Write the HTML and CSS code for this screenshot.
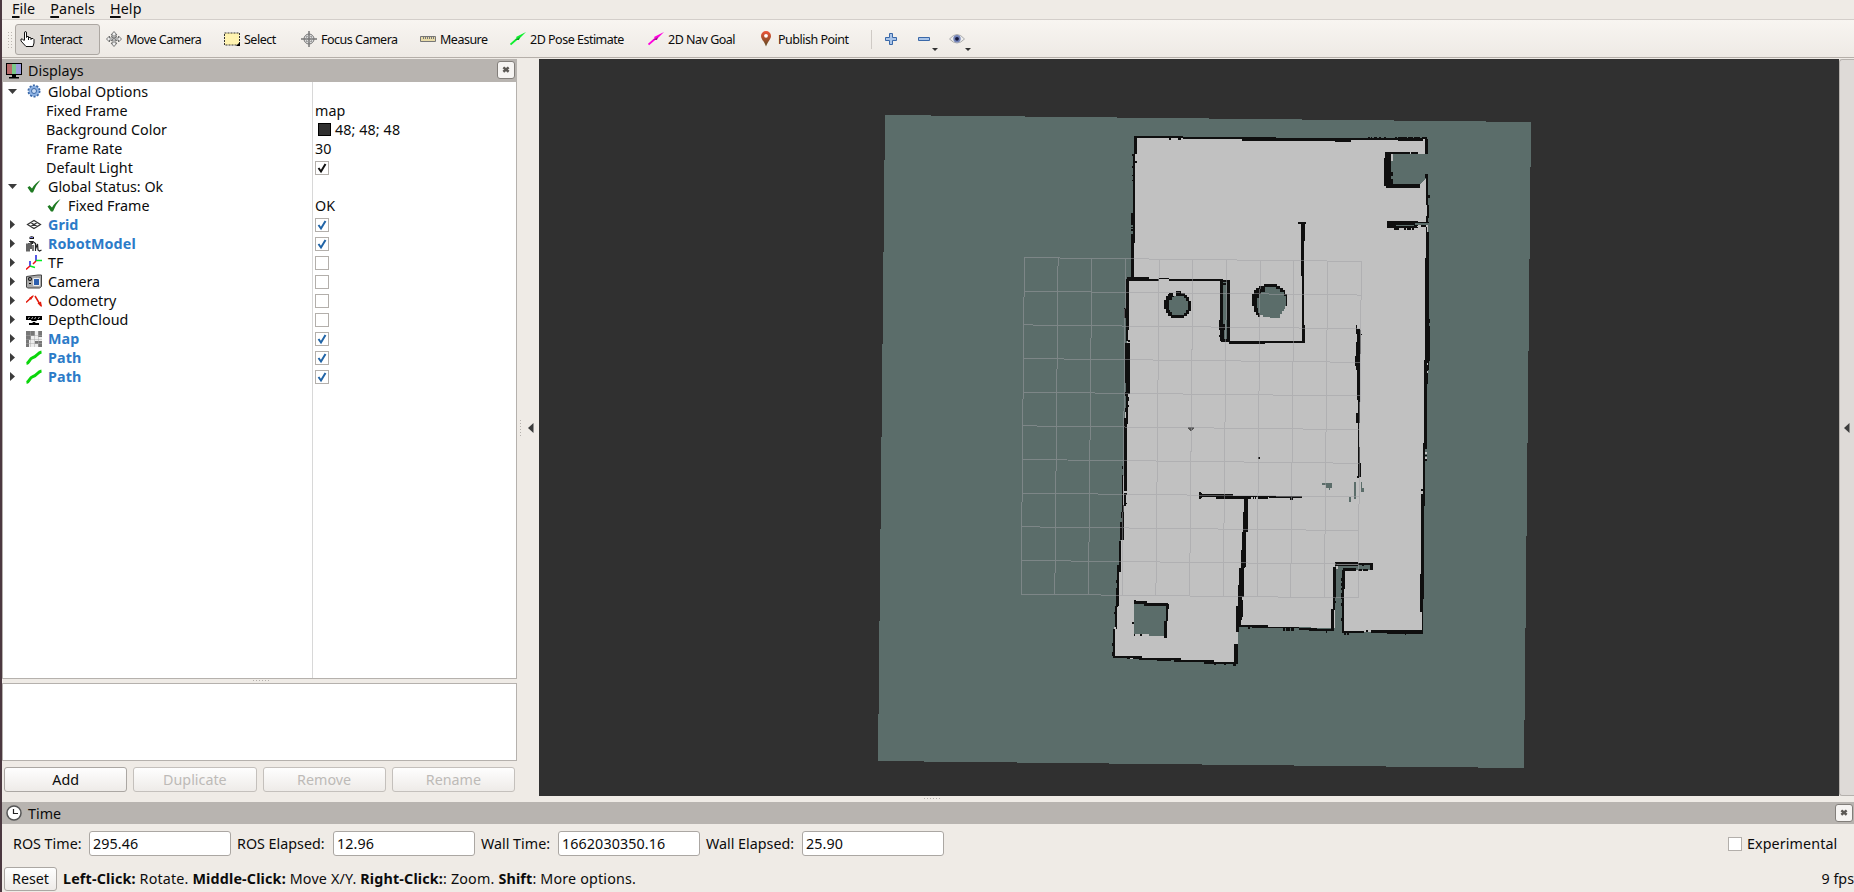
FILE: index.html
```html
<!DOCTYPE html>
<html lang="en">
<head>
<meta charset="utf-8">
<title>RViz</title>
<link rel="stylesheet" href="styles.css">
</head>
<body>
<svg class="defs" width="0" height="0">
  <defs>
    <linearGradient id="pin" x1="0" y1="0" x2="0" y2="1"><stop offset="0" stop-color="#f0543a"/><stop offset="1" stop-color="#5a4a20"/></linearGradient>
    <symbol id="close" viewBox="0 0 18 18"><path d="M6 6l6 5M12 6l-6 5" stroke="#5c5955" stroke-width="2.8"/></symbol>
    <symbol id="down" viewBox="0 0 9 9"><path d="M0 2h9L4.500 7z" fill="#3c3c3c"/></symbol>
    <symbol id="right" viewBox="0 0 9 9"><path d="M2 0v9l5-4.500z" fill="#3c3c3c"/></symbol>
    <symbol id="tick" viewBox="0 0 14 14"><path d="M.5 8l2-1.500 2.500 2.500Q8 3.500 13.500 .5 8.500 6 6 13H4Z" fill="#1e7a22"/></symbol>
    <symbol id="mark" viewBox="0 0 12 12"><path d="M2.500 6l2.500 3.500L9.500 2" fill="none" stroke="currentColor" stroke-width="2"/></symbol>
    <symbol id="path" viewBox="0 0 16 16"><path d="M.5 13.500C3.500 13 3 8.500 7 7.500S11.500 2.500 15.500 2" fill="none" stroke="#0bd50b" stroke-width="3"/></symbol>
  </defs>
</svg>
<div class="window">
  <nav class="menubar"><span><u>F</u>ile</span><span><u>P</u>anels</span><span><u>H</u>elp</span></nav>
  <div class="toolbar">
    <i class="grip"></i>
    <button class="tool active t1"><svg class="ic" viewBox="0 0 16 16"><path d="M4.500 9V2Q4.500.5 5.500.5T6.500 2v4.500L7 5.500h1.500l.5 1h1.500l.5 1h2l1 1V12l-1 3.500H6L1 10V8h1.500L4.500 10M8.500 6v3M11 7v2" fill="#fff" stroke="#111"/></svg><b>Interact</b></button>
    <button class="tool t2"><svg class="ic" viewBox="0 0 16 16"><path d="M8 .5L11 4H9v3h3.500V5L15.500 8 12.500 11V9H9v3h2L8 15.500 5 12h2V9H3.500v2L.5 8 3.500 5v2H7V4H5zM5 5l6 5M11 5l-6 5" fill="#eee" stroke="#666" stroke-width=".9"/></svg><b>Move Camera</b></button>
    <button class="tool t3"><svg class="ic" viewBox="0 0 16 16"><path d="M.5 2h15v12H.5z" fill="#fff3b0" stroke="#333" stroke-dasharray="2 1"/><path d="M16 11v4h-4z"/></svg><b>Select</b></button>
    <button class="tool t4"><svg class="ic" viewBox="0 0 16 16"><circle cx="8" cy="8" r="5" fill="#ddd" stroke="#777"/><path d="M8 0v16M0 8h16" fill="none" stroke="#777" stroke-width="1.500"/><path d="M5 5.500h6M5 10.500h6M5.500 5v6M10.500 5v6" stroke="#999" stroke-width=".8"/></svg><b>Focus Camera</b></button>
    <button class="tool t5"><svg class="ic" viewBox="0 0 16 16"><path d="M.5 5.500h15v5H.5z" fill="#e8dba8" stroke="#777"/><path d="M3.500 6v2M5.500 6v2M7.500 6v2M9.500 6v2M11.500 6v2M13.500 6v2" stroke="#777"/></svg><b>Measure</b></button>
    <button class="tool t6"><svg class="ic" viewBox="0 0 16 16"><path d="M.5 13.500L8 7" stroke="#0df02d" stroke-width="1.800"/><path d="M16 1L6 6l2 3z" fill="#0df02d"/><path d="M5 9l4 0 1-3z" fill="#129a24"/></svg><b>2D Pose Estimate</b></button>
    <button class="tool t7"><svg class="ic" viewBox="0 0 16 16"><path d="M.5 13.500L8 7" stroke="#f0d" stroke-width="1.800"/><path d="M16 1L6 6l2 3z" fill="#f0d"/><path d="M5 9l4 0 1-3z" fill="#9a1a8a"/></svg><b>2D Nav Goal</b></button>
    <button class="tool t8"><svg class="ic" viewBox="0 0 16 16"><path d="M8 0a5 5 0 0 1 5 5C13 8 9.500 11 8 15.500 6.500 11 3 8 3 5a5 5 0 0 1 5-5z" fill="url(#pin)"/><circle cx="8" cy="4.800" r="1.900" fill="#fff"/></svg><b>Publish Point</b></button>
    <i class="sep"></i>
    <span class="mini"><svg class="ic" viewBox="0 0 16 16"><path d="M6.500 2.500h3v4h4v3h-4v4h-3v-4h-4v-3h4z" fill="#a9c4e8" stroke="#3a68a8"/></svg></span>
    <span class="mini drop"><svg class="ic" viewBox="0 0 16 16"><path d="M2.500 6.500h11v3h-11z" fill="#a9c4e8" stroke="#3a68a8"/></svg></span>
    <span class="mini drop"><svg class="ic" viewBox="0 0 16 16"><path d="M.5 8Q8-1 15.500 8 8 16 .5 8z" fill="#eee" stroke="#aaa"/><circle cx="8" cy="7.800" r="3.700" fill="#7484b8"/><circle cx="8" cy="7.800" r="1.900" fill="#15183c"/></svg></span>
  </div>
  <div class="main">
    <section class="dock">
      <header class="title"><svg class="ic" viewBox="0 0 16 16"><path d="M0 0h16v12H0z"/><path d="M1 1h5v10H1z" fill="#b96a6a"/><path d="M6 1h4v10H6z" fill="#7cc98a"/><path d="M10 1h5v10h-5z" fill="#9c9cdc"/><path d="M6 12h4v2h3v1.500H3V14h3z"/></svg><span>Displays</span><svg class="close"><use href="#close"/></svg></header>
      <div class="tree">
        <div class="row"><svg class="ar"><use href="#down"/></svg><svg class="ic" viewBox="0 0 16 16"><circle cx="8" cy="7" r="5.500" fill="#8db2e3" stroke="#3a68a8" stroke-width="2" stroke-dasharray="2 1.450"/><circle cx="8" cy="7" r="4.700" fill="#8db2e3"/><circle cx="8" cy="7" r="2.500" fill="#c8daf2" stroke="#3a68a8"/></svg><span class="name">Global Options</span></div>
        <div class="row leaf"><span class="name">Fixed Frame</span><span class="val">map</span></div>
        <div class="row leaf"><span class="name">Background Color</span><span class="val"><i class="swatch"></i>48; 48; 48</span></div>
        <div class="row leaf"><span class="name">Frame Rate</span><span class="val">30</span></div>
        <div class="row leaf"><span class="name">Default Light</span><span class="val"><i class="box black"><svg><use href="#mark"/></svg></i></span></div>
        <div class="row"><svg class="ar"><use href="#down"/></svg><svg class="ic tk"><use href="#tick"/></svg><span class="name">Global Status: Ok</span></div>
        <div class="row sub"><svg class="ic tk"><use href="#tick"/></svg><span class="name">Fixed Frame</span><span class="val">OK</span></div>
        <div class="row on"><svg class="ar"><use href="#right"/></svg><svg class="ic" viewBox="0 0 16 16"><path d="M1.500 7.500L8 3.500l6.500 4-6.500 4zM4.700 5.500l6.600 4M11.300 5.500l-6.600 4" fill="none" stroke="#333" stroke-width="1.200"/></svg><span class="name">Grid</span><span class="val"><i class="box"><svg><use href="#mark"/></svg></i></span></div>
        <div class="row on"><svg class="ar"><use href="#right"/></svg><svg class="ic" viewBox="0 0 16 16"><path d="M3.500 1q2-1.500 4.500 0v2H3.500z" fill="#111"/><path d="M4 1.500h3" stroke="#77c" stroke-width="1"/><path d="M1 7.500v8M3 7v8.500M5 6v7M6.500 5v3" fill="none" stroke="#222" stroke-width="1.400"/><path d="M3 5.500h4l2.500 2V15M7 9v6M9.500 13l2-5 .5 6 1.500 1 2-1" fill="none" stroke="#222" stroke-width="1.200"/></svg><span class="name">RobotModel</span><span class="val"><i class="box"><svg><use href="#mark"/></svg></i></span></div>
        <div class="row"><svg class="ar"><use href="#right"/></svg><svg class="ic" viewBox="0 0 16 16"><g fill="none" stroke-width="1.500"><path d="M10 6V0M4 11V6" stroke="#22d"/><path d="M10 5.500h6M4 11l5 1.500" stroke="#0e2"/><path d="M10 6L7 9M4 11l-4 3.500" stroke="#e11"/></g></svg><span class="name">TF</span><span class="val"><i class="box"></i></span></div>
        <div class="row"><svg class="ar"><use href="#right"/></svg><svg class="ic" viewBox="0 0 16 16"><path d="M.5 2.500L12 1h3.500v11.500l-2 1.500H1.500L.5 13z" fill="#aaa" stroke="#444"/><circle cx="4" cy="5" r="2" fill="#111"/><circle cx="4" cy="5" r=".8" fill="#fff"/><path d="M7.500 4.500h6v7h-6z" fill="#2d5fae" stroke="#eee"/><path d="M3 9h2v1H3z"/></svg><span class="name">Camera</span><span class="val"><i class="box"></i></span></div>
        <div class="row"><svg class="ar"><use href="#right"/></svg><svg class="ic" viewBox="0 0 16 16"><path d="M0 9.500L7 3M9 3l6 10" stroke="#e21b0c" stroke-width="1.500"/><path d="M8 2L3 5l2 2zM16 14l-1-5.500-3.500 2z" fill="#e21b0c"/></svg><span class="name">Odometry</span><span class="val"><i class="box"></i></span></div>
        <div class="row"><svg class="ar"><use href="#right"/></svg><svg class="ic" viewBox="0 0 16 16"><path d="M0 4h16v4h-5l-2 3h4v2H3v-2h4L5 8H0z"/><path d="M2 6.500l1.500-1M5.500 6.500l1.500-1M8.500 6.500l1.500-1M12 6.500l1.500-1M5.500 9.500h5" stroke="#eee"/></svg><span class="name">DepthCloud</span><span class="val"><i class="box"></i></span></div>
        <div class="row on"><svg class="ar"><use href="#right"/></svg><svg class="ic" viewBox="0 0 16 16"><path d="M0 0h16v16H0z" fill="#eee"/><path d="M0 0h9v5H5v4H3v7H0zM12 0h4v6h-4zM9 10h7v6h-4v-3H9z" fill="#777"/><path d="M4.500 0v16M8.500 0v16M12.500 0v16M0 4.500h16M0 8.500h16M0 12.500h16" stroke="#aaa" stroke-width=".5"/></svg><span class="name">Map</span><span class="val"><i class="box"><svg><use href="#mark"/></svg></i></span></div>
        <div class="row on"><svg class="ar"><use href="#right"/></svg><svg class="ic"><use href="#path"/></svg><span class="name">Path</span><span class="val"><i class="box"><svg><use href="#mark"/></svg></i></span></div>
        <div class="row on"><svg class="ar"><use href="#right"/></svg><svg class="ic"><use href="#path"/></svg><span class="name">Path</span><span class="val"><i class="box"><svg><use href="#mark"/></svg></i></span></div>
      </div>
      <div class="hsplit"><i class="dots"></i></div>
      <div class="desc"></div>
      <div class="buttons"><button class="btn">Add</button><button class="btn" disabled>Duplicate</button><button class="btn" disabled>Remove</button><button class="btn" disabled>Rename</button></div>
    </section>
    <div class="vsplit"><i class="vdots"></i><svg width="6" height="10"><path d="M5.500 0v10L0 5z" fill="#3c3c3c"/></svg></div>
    <svg class="scene" viewBox="539 59 1300 737" shape-rendering="crispEdges">
      <path fill="#5b6d6a" d="M885 115L1531 122L1524 768L878 761z"/>
      <path fill="#c1c1c1" d="M1134.500 137L1427 138.500V154H1391V184H1420L1427 178L1428 222V227L1427 330L1424 500L1422 632H1343L1344 570H1372V563H1335V628L1239 626L1236 663L1114 657L1115 620L1119 560L1122 525L1123 493L1126 393L1127.500 278H1133z"/>
      <!-- upper rooms -->
      <g transform="translate(1080 110) scale(.33333)">
        <path fill="#5b6d6a" d="M429 513h13v176h-13zM933 132h111v60h-6l-18 18v12h-87z"/>
        <path fill="#c1c1c1" d="M933 132h6v21h-6z"/>
        <g fill="#0f0f0f">
          <path d="M163 78h146v6h-146zM309 81h279v7H309zM486 87h327v6H486zM588 84h366v6H588zM765 90h48v6h-48zM864 81h6v4h-6zM873 81h3v4h-3zM882 81h9v4h-9zM897 81h6v4h-6zM912 81h5v4h-5zM945 81h6v4h-6zM954 81h26v12h-26zM980 84h49v9h-49zM984 81h14v6h-14zM1003 81h17v6h-17zM1025 81h16v6h-16zM1035 87h8v44h-8z"/>
          <path d="M267 84h6v6h-6zM294 84h9v6h-9z"/>
          <path d="M163 78h7v55h-7zM160 133h4v80h-4zM156 132h6v6h-6zM165 153h6v6h-6zM156 168h6v6h-6zM156 195h6v3h-6zM156 210h6v3h-6zM159 210h6v190h-6zM153 309h9v36h-9zM153 351h6v3h-6zM153 358h6v6h-6zM153 372h12v27h-12zM153 399h9v106h-9z"/>
          <path d="M141 501h66v9h-66zM141 507h97v6h-97zM238 504h30v4h-30zM268 506h160v7H268zM138 507h9v153h-9zM138 660h7v33h-7zM132 594h5v30h-5zM144 690h6v6h-6zM135 699h15v82h-15z"/>
          <path d="M420 507h9v185h-9zM417 630h6v30h-6zM417 675h6v6h-6zM429 642h6v18h-6zM423 654h9v38h-9zM429 510h18v6h-18zM429 519h9v6h-9zM441 510h9v185h-9zM423 687h24v9h-24zM447 693h228v6H447zM447 696h96v6h-96zM543 699h12v3h-12z"/>
          <path d="M654 336h24v6h-24zM663 342h12v51h-12zM663 393h9v105h-9zM666 498h6v150h-6zM666 645h9v53h-9z"/>
          <path d="M915 126h75v6h-75zM993 126h21v6h-21zM912 144h21v84h-21zM915 126h18v20h-18zM933 186h6v12h-6zM933 207h6v15h-6zM918 222h102v12H918zM1038 192h5v94h-5zM1035 192h6v12h-6zM1044 255h6v9h-6zM1040 285h7v38h-7zM1038 318h7v20h-7z"/>
          <path d="M921 333h93v21h-93zM1010 336h37v3h-37zM942 354h15v6h-15zM972 354h6v6h-6zM981 354h12v6h-12zM996 354h6v6h-6zM1002 345h6v6h-6zM1023 345h15v6h-15zM1038 351h4v30h-4zM1041 366h6v75h-6zM1035 444h12v198h-12zM1038 366h9v80h-9zM1044 627h6v12h-6zM1035 640h13v140h-13zM1047 648h3v106h-3z"/>
          <path d="M828 645h3v27h-3zM831 657h9v84h-9zM828 696h12v84h-12zM825 738h6v30h-6zM843 672h3v3h-3z"/>
          <path d="M267 549h12v6h9v-12h15v6h12v6h6v6h6v12h6v30h-6v9h-6v6h-9v6h-39v-6h-9v-9h-6v-12h-6v-26h6v-13h6v-6h3z"/>
          <path d="M552 522h39v6h9v6h9v6h6v12h6v36h-6v9h-6v6h-9v12H540v6h-6v-6h-6v-9h-6v-18h-6v-36h6v-12h6v-6h9v-6h15zM555 618h6v3h-6z"/>
        </g>
        <g fill="#5b6d6a"><path d="M276 561h6v-3h30v6h6v9h6v27h-6v9h-6v6h-36v-8h-6v-7h-3v-30h9z"/><path d="M555 531h33v6h12v9h12v12h6v30h-3v9h-3v6h-6v9h-6v12h-30v-3h-21v-6h-9v-6h-6v-15h-3v-30h6v-12h6v-6h12z"/><path d="M948 345h54v3h-54zM1005 340h39v4h-39z"/></g>
        <path fill="#c1c1c1" d="M279 550h9v7h-9zM1010 347h12v4h-12z"/>
        <path fill="#555" d="M840 660h3v72h-3z"/>
      </g>
      <!-- lower rooms -->
      <g transform="translate(1080 360) scale(.33333)">
        <path fill="#5b6d6a" d="M162 738v-6h30v6h66v90h-51v-6h-45zM768 618h105v9h-84v196h-24v-110h3zM726 369h30v15h-6v6h-3v-6h-9v-9h-12zM822 366h6v51h-6zM807 411h6v15h-6zM843 366h3v18h6v12h-9z"/>
        <path fill="#c1c1c1" d="M768 618h6v9h-6z"/>
        <g fill="#0f0f0f">
          <path d="M138 0h12v103h-12zM135 0h6v65h-6zM135 66h5v3h-5zM135 96h5v12h-5zM138 102h7v90h-7zM144 111h3v12h-3zM144 135h3v6h-3zM135 144h6v12h-6zM132 174h9v216h-9zM126 318h4v9h-4zM126 345h4v93h-4zM132 387h9v6h-9zM132 400h9v5h-9zM132 405h5v33h-5zM135 429h6v3h-6zM126 435h5v105h-5zM123 456h5v18h-5zM120 486h7v54h-7zM117 543h6v92h-6zM111 615h6v122h-6zM108 660h4v8h-4zM108 684h6v56h-6zM105 738h6v69h-6zM102 756h4v6h-4zM99 807h6v80h-6zM96 849h5v9h-5zM96 876h9v12h-9z"/>
          <path d="M99 888h87v6H99zM141 892h9v4h-9zM159 894h143v4H159zM177 898h125v3H177zM232 899h40v4h-40zM282 900h120v7H282zM372 905h99v6h-99zM402 910h6v4h-6zM432 909h6v6h-6zM459 910h9v8h-9zM462 852h11v60h-11zM468 738h9v78h-9zM474 675h12v105h-12zM480 765h9v6h-9zM480 720h10v45h-10zM474 711h9v90h-9zM477 624h15v86h-15zM483 570h12v55h-12zM486 516h12v105h-12zM489 456h15v60h-15zM492 414h12v50h-12z"/>
          <path d="M357 396h6v21h-6zM363 399h3v15h-3zM357 402h102v8H357zM408 408h105v9H408zM513 408h81v3h-81zM519 411h3v5h-3zM525 411h3v5h-3zM534 411h30v5h-30zM567 411h27v3h-27zM594 409h72v5h-72zM630 412h9v7h-9z"/>
          <path d="M480 795h84v6h-84zM504 801h6v6h-6zM516 800h140v5H516zM609 805h6v7h-6zM618 805h12v7h-12zM633 805h9v7h-9zM656 804h54v6h-54zM686 807h74v5h-74zM738 811h3v8h-3zM753 746h9v66h-9zM759 621h9v93h-9zM760 709h4v40h-4zM762 722h6v7h-6z"/>
          <path d="M765 606h69v12h-69zM834 609h44v6h-44zM846 612h6v6h-6zM870 609h8v20h-8zM789 624h39v9h-39zM834 627h12v6h-12zM849 627h15v6h-15zM786 630h9v57h-9zM783 654h6v8h-6zM783 668h6v10h-6zM783 684h9v6h-9zM787 690h4v128h-4zM783 698h6v20h-6zM783 729h6v9h-6zM783 774h6v9h-6zM787 813h65v6h-65zM792 819h6v6h-6zM801 819h6v6h-6zM858 811h6v6h-6zM873 810h156v9H873zM921 813h108v9H921zM975 821h3v4h-3zM1023 402h9v315h-9zM1023 387h6v6h-6zM1020 642h9v114h-9zM1026 750h3v68h-3zM1029 250h7v188h-7zM1032 0h9v252h-9zM1041 0h3v72h-3zM1035 250h6v18h-6zM1035 285h6v3h-6zM1035 298h6v4h-6z"/>
          <path d="M825 0h15v18h-15zM831 18h9v103h-9zM834 120h5v70h-5zM828 158h6v30h-6zM834 190h4v72h-4zM835 260h4v90h-4zM838 309h5v42h-5zM831 348h6v5h-6zM534 291h6v6h-6z"/>
          <path d="M162 720h6v12h-6zM168 723h33v9h-33zM192 729h72v9h-72zM258 732h9v14h-9zM258 745h5v39h-5zM252 783h9v51h-9zM156 786h6v6h-6zM162 822h3v6h-3zM180 822h6v6h-6z"/>
        </g>
        <path fill="#555" d="M324 201h18v6h-3v3h-3v3h-6v-3h-3v-3h-3zM765 612h69v3h-69z"/>
        <path fill="#5b6d6a" d="M774 619h96v5h-96zM834 615h12v5h-12z"/>
        <path fill="#c1c1c1" d="M1035 276h6v6h-6zM1035 290h6v7h-6zM1041 9h4v6h-4zM1041 33h4v5h-4zM102 802h6v6h-6zM150 893h9v4h-9z"/>
      </g>
      <g transform="matrix(33.7 .38 -.33 33.65 1024.4 257.6)"><path class="grid" d="M0 0H10M0 1H10M0 2H10M0 3H10M0 4H10M0 5H10M0 6H10M0 7H10M0 8H10M0 9H10M0 10H10M0 0V10M1 0V10M2 0V10M3 0V10M4 0V10M5 0V10M6 0V10M7 0V10M8 0V10M9 0V10M10 0V10"/></g>
    </svg>
    <div class="side"><svg width="6" height="10"><path d="M5.500 0v10L0 5z" fill="#3c3c3c"/></svg></div>
  </div>
  <div class="gap"><i class="dots"></i></div>
  <header class="title time"><svg class="ic" viewBox="0 0 16 16"><circle cx="8" cy="8" r="7" fill="#fff" stroke="#555" stroke-width="1.500"/><path d="M7.500 4v4.500H12" fill="none" stroke="#222" stroke-width="1.200"/></svg><span>Time</span><svg class="close"><use href="#close"/></svg></header>
  <div class="times">
    <label class="l1">ROS Time:</label><span class="field">295.46</span>
    <label class="l2">ROS Elapsed:</label><span class="field">12.96</span>
    <label class="l3">Wall Time:</label><span class="field">1662030350.16</span>
    <label class="l4">Wall Elapsed:</label><span class="field">25.90</span>
    <span class="exp"><i class="box"></i>Experimental</span>
  </div>
  <footer class="status"><button class="btn reset">Reset</button><p><b>Left-Click:</b> Rotate. <b>Middle-Click:</b> Move X/Y. <b>Right-Click:</b>: Zoom. <b>Shift</b>: More options.</p><span class="fps">9 fps</span></footer>
</div>
</body>
</html>
```
FILE: styles.css
```css
* { box-sizing: border-box; }
body {
  margin: 0;
  width: 1854px;
  height: 892px;
  overflow: hidden;
  background: #efebe6;
  font: 14.300px/19px "Noto Sans", "Open Sans", sans-serif;
  letter-spacing: 0;
  color: #0c0c0c;
}
button { font: inherit; letter-spacing: inherit; color: inherit; padding: 0; margin: 0; }
i { font-style: normal; display: block; flex: none; }
svg { display: block; flex: none; }
.defs { position: absolute; }
.ic { width: 16px; height: 16px; }
.window { display: flex; flex-direction: column; height: 892px; border-left: 2px solid #4b3840; }

.menubar { display: flex; height: 20px; padding-left: 10px; gap: 15px; line-height: 18px; letter-spacing: .1px; border-bottom: 1px solid #d3ceca; }
.menubar u { text-underline-offset: 2px; text-decoration-thickness: 2px; }

.toolbar { display: flex; align-items: center; height: 38px; padding-top: 1px; border-bottom: 1px solid #b5afa9; background: linear-gradient(#f8f5f1, #eeeae5); font-size: 12.500px; letter-spacing: -.5px; }
.grip { width: 5px; height: 17px; margin: 0 3px 0 5px; background: radial-gradient(circle, #bbb5af 35%, transparent 45%) 0 0/3px 3px; }
.tool { display: flex; align-items: center; gap: 4px; height: 31px; border: 1px solid transparent; border-radius: 3px; background: none; padding-left: 4px; white-space: nowrap; }
.tool b { font-weight: 400; }
.active { border-color: #aca7a2; background: #dedad6; }
.t1 { width: 85px; margin-right: 1px; }
.t2 { width: 118px; }
.t3 { width: 77px; }
.t4 { width: 119px; }
.t5 { width: 90px; }
.t6 { width: 138px; }
.t7 { width: 110px; }
.t8 { width: 118px; }
.sep { width: 1px; height: 19px; background: #cfcac5; margin-right: 11px; }
.mini { position: relative; width: 33px; }
.drop::after { content: ""; position: absolute; left: 16px; top: 17px; border: 3px solid transparent; border-top-color: #333; border-bottom: 0; }

.main { display: flex; height: 738px; padding-top: 1px; }
.dock { width: 515px; display: flex; flex-direction: column; }
.title { display: flex; align-items: center; height: 23px; background: #b8b4b0; padding-left: 4px; font-size: 14.300px; }
.title span { margin-left: 6px; flex: 1; }
.close { width: 18px; height: 18px; border: 1px solid #827e7a; border-radius: 3px; background: #f6f4f2; margin: 0 2px 2px 0; }
.tree { height: 597px; border: 1px solid #b5b1ad; border-top: 0; background: linear-gradient(#d8d8d8, #d8d8d8) 309px 0/1px 100% no-repeat #fff; }
.row { display: flex; align-items: center; height: 19px; position: relative; padding-left: 5px; white-space: nowrap; }
.ar { width: 9px; height: 9px; margin-right: 9px; }
.name { margin-left: 6px; }
.leaf { padding-left: 37px; }
.sub { padding-left: 43px; }
.tk { height: 15px; padding: 0 1px; }
.on .name { font-weight: 700; color: #2c7bc8; letter-spacing: .1px; }
.val { position: absolute; left: 312px; display: flex; align-items: center; letter-spacing: .1px; }
.swatch { width: 13px; height: 13px; background: #303030; border: 1px solid #000; margin: 0 4px 0 3px; }
.box { width: 14px; height: 14px; border: 1px solid #b3afab; background: #fff; color: #2164a6; }
.box svg { width: 12px; height: 12px; }
.black { color: #111; }
.hsplit { height: 4px; display: flex; justify-content: center; padding: 1px 0 0 3px; }
.dots { width: 17px; height: 1px; background: repeating-linear-gradient(90deg, #b5b1ad 0 1px, transparent 1px 3px); }
.desc { height: 78px; border: 1px solid #b5b1ad; background: #fff; }
.buttons { display: flex; gap: 6px; padding: 6px 2px 0; }
.btn { flex: 1; height: 25px; border: 1px solid #aba7a3; border-radius: 3px; background: linear-gradient(#fefefe, #eeebe8); }
.btn:disabled { color: #bdbab7; border-color: #c4c0bc; }
.vsplit { width: 22px; display: flex; align-items: center; padding: 0 0 0 3px; gap: 7px; }
.vdots { width: 1px; height: 16px; background: repeating-linear-gradient(#b5b1ad 0 1px, transparent 1px 3px); }
.scene { width: 1300px; height: 737px; background: #303030; }
.grid { fill: none; stroke: rgba(160, 160, 164, .5); stroke-width: 1px; vector-effect: non-scaling-stroke; }
.side { width: 15px; display: flex; align-items: center; padding-left: 4px; background: #dedad7; border: 1px solid #b5b1ad; border-right: 0; border-radius: 3px 0 0 3px; }

.gap { height: 6px; display: flex; justify-content: center; padding: 2px 0 0 8px; }
.time { height: 22px; }
.time .close { margin: 0 1px 1px 0; }
.times { display: flex; align-items: center; padding: 7px 0 0 11px; height: 32px; white-space: nowrap; }
.l1 { width: 76px; }
.l2, .l4 { width: 102px; padding-left: 6px; }
.l3 { width: 83px; padding-left: 6px; }
.field { width: 142px; height: 25px; border: 1px solid #aba7a3; border-radius: 3px; background: #fff; padding: 2px 3px; letter-spacing: .1px; }
.exp { display: flex; align-items: center; gap: 5px; margin-left: 784px; letter-spacing: .1px; }
.status { display: flex; align-items: center; padding: 0 0 0 2px; margin-top: 10px; height: 25px; white-space: nowrap; }
.reset { flex: none; width: 53px; height: 24px; }
.status p { margin: 0 0 0 6px; flex: 1; letter-spacing: .17px; }
```
